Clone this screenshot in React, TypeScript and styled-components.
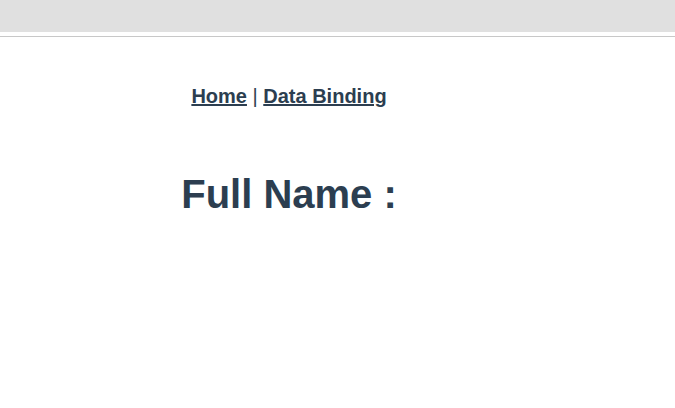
import React from "react";
import styled, { createGlobalStyle } from "styled-components";

const GlobalStyle = createGlobalStyle`
  html, body {
    margin: 0;
    padding: 0;
    background: #ffffff;
  }
`;

const TopBar = styled.div`
  height: 32px;
  background-color: #e0e0e0;
`;

const Rule = styled.div`
  margin-top: 4px;
  height: 1px;
  background-color: #c8c8c8;
`;

const Main = styled.div`
  width: 578px;
  text-align: center;
  color: #2c3e50;
  font-family: "Liberation Sans", Arial, Helvetica, sans-serif;
`;

const Nav = styled.nav`
  padding-top: 48px;
  font-size: 20px;
  line-height: 23px;
  font-weight: bold;
`;

const NavLink = styled.a`
  color: #2c3e50;
  font-weight: bold;
  text-decoration: underline;
  cursor: pointer;
`;

const Separator = styled.span`
  font-weight: normal;
`;

const Title = styled.h1`
  margin: 63px 0 0;
  font-size: 40px;
  line-height: 46px;
  font-weight: bold;
`;

const App: React.FC = () => {
  return (
    <>
      <GlobalStyle />
      <TopBar />
      <Rule />
      <Main>
        <Nav>
          <NavLink>Home</NavLink>
          <Separator> | </Separator>
          <NavLink>Data Binding</NavLink>
        </Nav>
        <Title>Full Name :</Title>
      </Main>
    </>
  );
};

export default App;
